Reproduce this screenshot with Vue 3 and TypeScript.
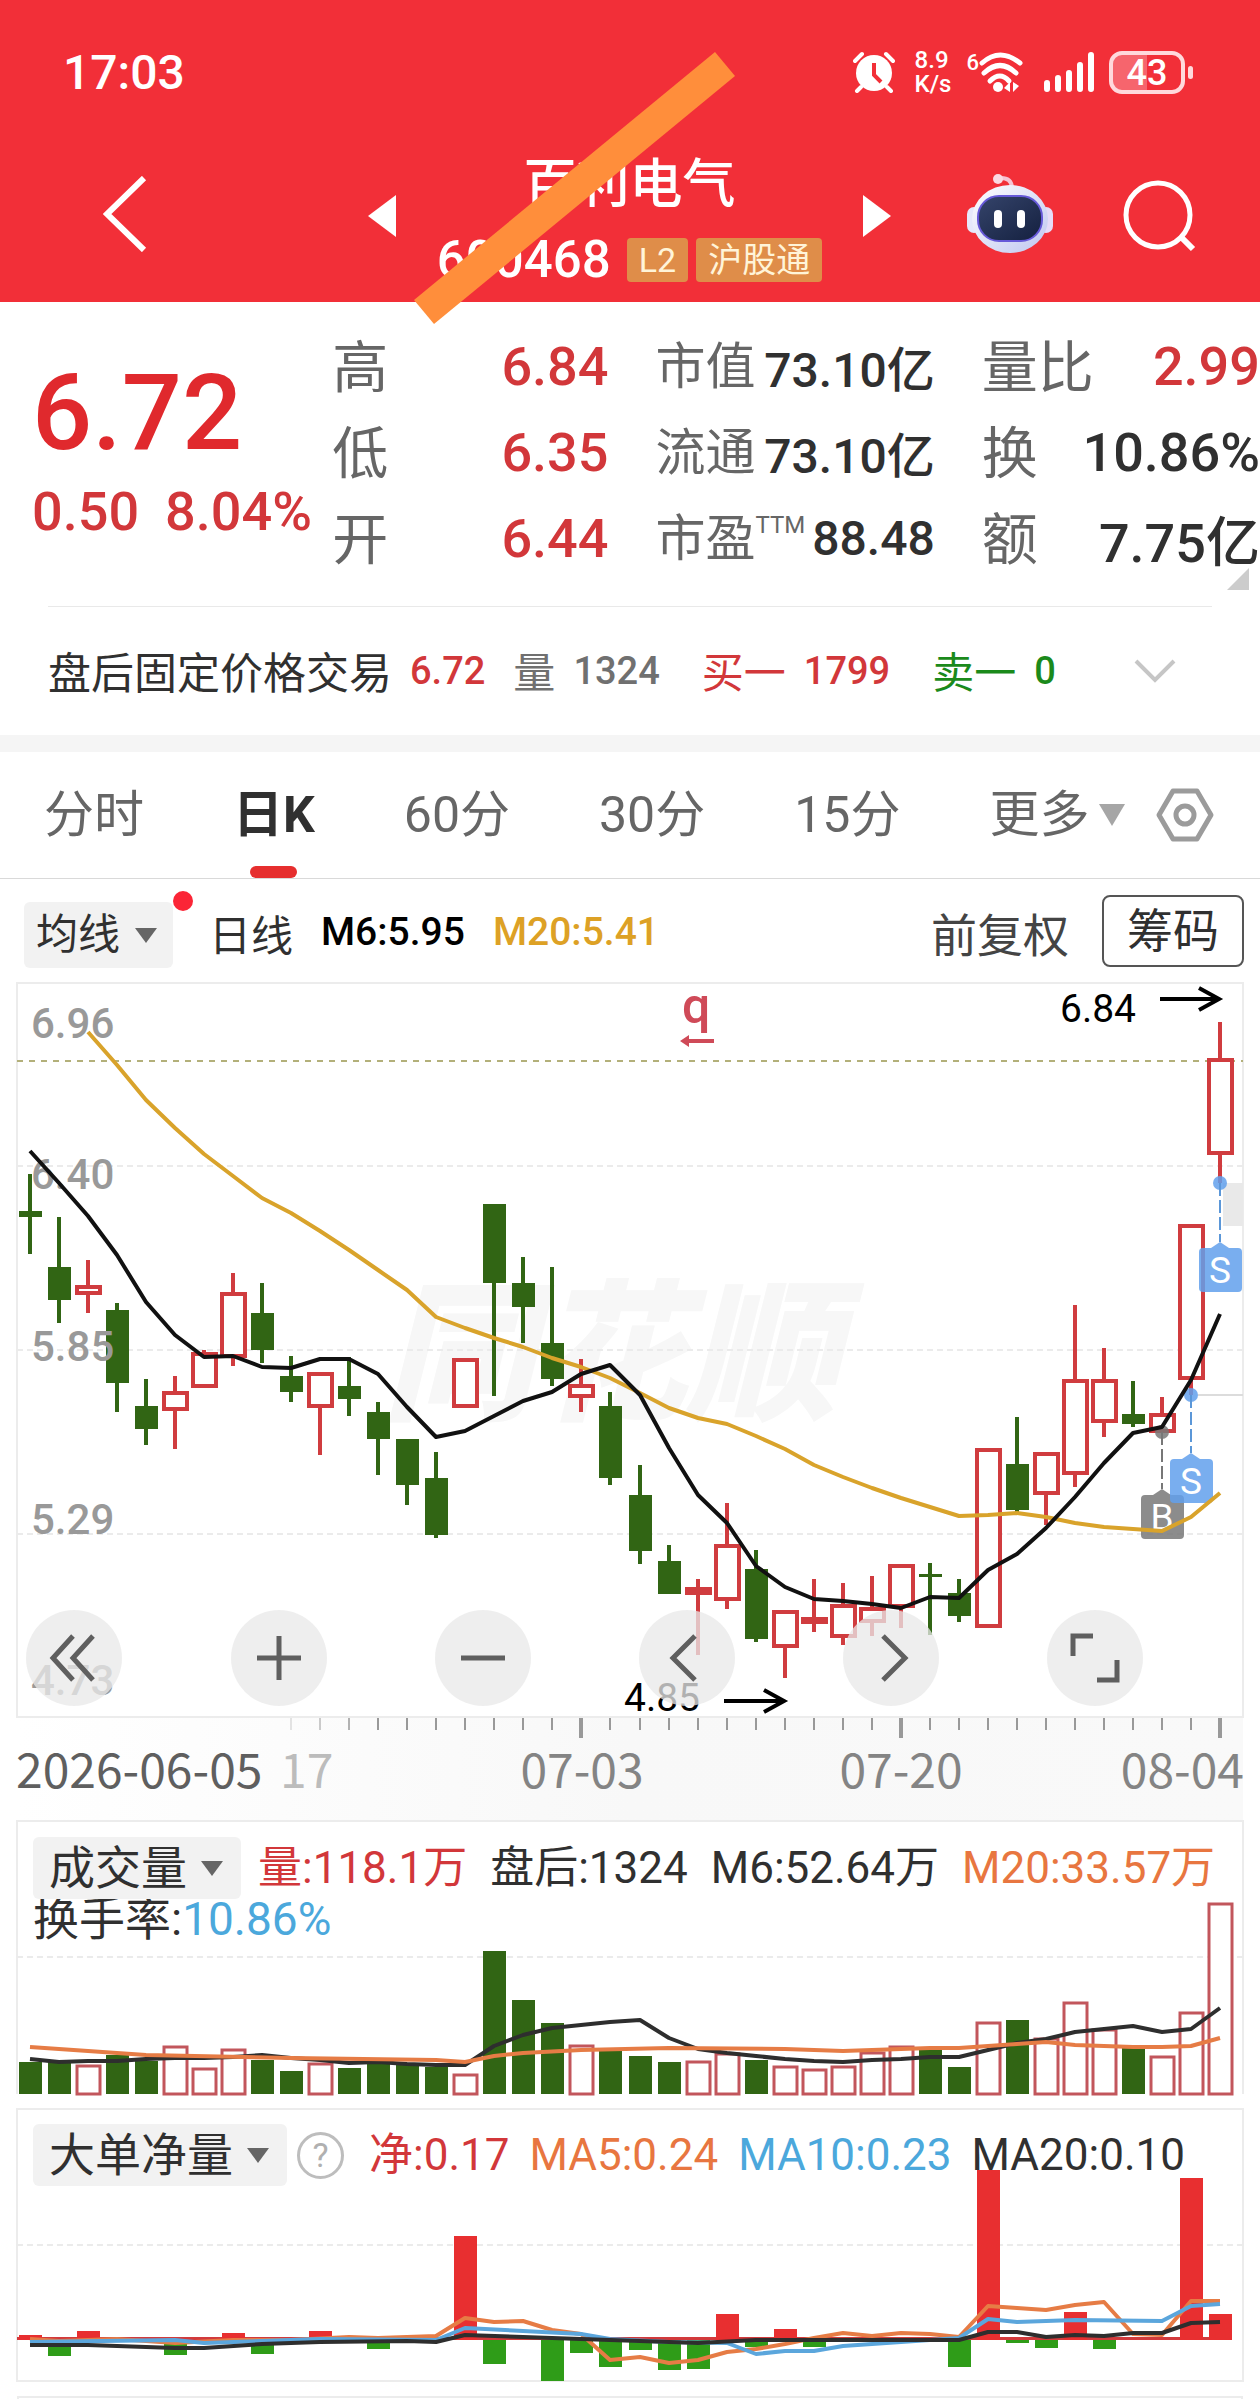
<script setup lang="ts">
type Candle = [high: number, top: number, bottom: number, low: number, up: 0 | 1]
type Point = [index: number, y: number]

const STEP = 29
const FIRST = 30
const HALF = 12

const cx = (i: number): number => FIRST + STEP * i + Math.round(i / 41)
const linePoints = (points: Point[]): string => points.map(([i, y]) => `${cx(i)},${y}`).join(' ')
const series = (ys: number[], start = 0): string => linePoints(ys.map((y, i) => [i + start, y] as Point))

const candles: Candle[] = [
  [194, 231, 237, 274, 0], [237, 287, 320, 343, 0], [280, 305, 314, 333, 1], [323, 330, 403, 432, 0],
  [399, 426, 449, 465, 0], [396, 411, 430, 469, 1], [370, 372, 407, 407, 1], [293, 312, 377, 386, 1],
  [303, 333, 370, 383, 0], [376, 396, 412, 422, 0], [392, 392, 427, 475, 1], [377, 406, 419, 436, 0],
  [422, 432, 459, 495, 0], [459, 459, 505, 525, 0], [472, 498, 555, 558, 0], [378, 378, 427, 428, 1],
  [224, 224, 303, 416, 0], [277, 303, 327, 363, 0], [287, 363, 399, 406, 0], [379, 404, 417, 432, 1],
  [412, 426, 498, 505, 0], [485, 515, 571, 584, 0], [565, 581, 614, 614, 0], [599, 607, 614, 675, 1],
  [523, 564, 620, 629, 1], [570, 589, 659, 662, 0], [630, 630, 667, 698, 1], [599, 637, 643, 652, 1],
  [603, 624, 657, 665, 1], [596, 627, 642, 656, 1], [584, 584, 627, 648, 1], [583, 594, 597, 655, 0],
  [599, 613, 636, 642, 0], [468, 468, 647, 647, 1], [437, 484, 530, 533, 0], [472, 472, 514, 545, 1],
  [325, 399, 494, 507, 1], [368, 399, 442, 457, 1], [401, 434, 444, 447, 0], [417, 433, 452, 452, 1],
  [244, 244, 399, 415, 1], [42, 78, 174, 203, 1],
]

const ma6 = series([
  171, 203, 236, 275, 322, 355, 377, 376, 387, 388, 379, 379, 394, 427, 457, 451, 436, 421, 412, 394, 385,
  415, 468, 515, 543, 586, 607, 619, 621, 624, 628, 617, 618, 590, 574, 548, 517, 483, 453, 447, 400, 334,
])
const ma20 = series([
  52, 85, 120, 148, 174, 196, 218, 233, 251, 270, 290, 310, 337, 348, 358, 367, 378, 387, 398, 413,
  428, 438, 444, 456, 469, 485, 497, 508, 518, 527, 536, 535, 533, 537, 543, 547, 549, 551, 537, 513,
], 2)

const priceLabels = [
  { text: '6.96', y: 58 }, { text: '6.40', y: 209 }, { text: '5.85', y: 381 },
  { text: '5.29', y: 554 }, { text: '4.73', y: 715 },
]
const ticks = Array.from({ length: 33 }, (_, k) => {
  const i = k + 9
  return { x: cx(i), major: i === 19 || i === 30 || i === 41, opacity: Math.min(1, (k + 1) / 4) }
})

const volumeTops = [
  242, 242, 245, 235, 241, 226, 248, 229, 240, 251, 243, 248, 244, 245, 247, 254, 131, 180, 203, 225, 230,
  236, 242, 241, 233, 240, 246, 249, 246, 232, 226, 230, 247, 202, 200, 218, 182, 209, 228, 236, 192, 83,
]
const volumeMa6 = series([
  239, 242, 241, 241, 239, 238, 238, 237, 235, 238, 240, 243, 242, 244, 245, 245, 226, 215, 208, 205, 202,
  200, 218, 229, 233, 236, 239, 241, 242, 240, 239, 237, 237, 230, 223, 219, 212, 209, 206, 212, 209, 188,
])
const volumeMa20 = linePoints([
  [0, 227], [4, 235], [9, 238], [14, 240], [15, 242], [16, 236], [17, 233], [19, 230], [22, 228], [26, 229],
  [28, 231], [31, 228], [32, 228], [34, 224], [35, 222], [36, 225], [38, 227], [39, 227], [40, 226], [41, 218],
])

const ZERO = 239
const inflow: Point[] = [
  [0, 235], [2, 231], [7, 233], [10, 231], [15, 136], [24, 214], [26, 229], [33, 70], [36, 212], [40, 78], [41, 214],
]
const outflow: Point[] = [
  [1, 256], [5, 255], [8, 254], [12, 249], [16, 264], [18, 281], [19, 253], [20, 267], [21, 250], [22, 270],
  [23, 269], [25, 247], [27, 247], [32, 267], [34, 243], [35, 248], [37, 249],
]
const netMa5 = linePoints([
  [0, 239], [1, 241], [3, 239], [5, 243], [7, 240], [9, 240], [11, 237], [12, 238], [13, 237], [14, 236],
  [15, 218], [16, 222], [17, 221], [18, 230], [19, 234], [20, 260], [21, 257], [22, 263], [23, 260], [24, 252],
  [25, 249], [26, 244], [27, 238], [28, 233], [29, 236], [30, 233], [31, 234], [32, 237], [33, 206], [34, 208],
  [35, 210], [36, 205], [37, 202], [38, 234], [39, 235], [40, 201], [41, 201],
])
const netMa10 = linePoints([
  [0, 242], [5, 240], [6, 243], [10, 239], [14, 240], [15, 228], [17, 231], [19, 234], [20, 239], [22, 242],
  [24, 243], [25, 254], [26, 251], [27, 251], [28, 246], [30, 242], [32, 238], [33, 219], [34, 222], [36, 220],
  [39, 221], [40, 206], [41, 204],
])
const netMa20 = linePoints([
  [0, 245], [2, 245], [3, 246], [5, 248], [6, 248], [8, 244], [10, 242], [13, 241], [14, 242], [15, 235],
  [17, 237], [19, 239], [22, 242], [23, 243], [25, 240], [32, 240], [33, 232], [34, 232], [35, 237], [36, 235],
  [37, 236], [38, 233], [39, 233], [40, 223], [41, 222],
])

const tradeMarks = [
  { kind: 'buy', text: 'B', x: cx(39), dot: 452, tip: 509, top: 515 },
  { kind: 'sell', text: 'S', x: cx(40), dot: 415, tip: 473, top: 479 },
  { kind: 'sell', text: 'S', x: cx(41), dot: 203, tip: 262, top: 268 },
]

const chartTools = [
  { label: '最早', d: 'M47 26 27 48 47 70M67 26 47 48 67 70' },
  { label: '放大', d: 'M26 48H70M48 26V70' },
  { label: '缩小', d: 'M26 48H70' },
  { label: '左移', d: 'M56 26 34 48 56 70' },
  { label: '右移', d: 'M40 26 62 48 40 70' },
  { label: '全屏', d: 'M46 26H26V46M70 50V70H50' },
]
</script>

<template>
  <main class="page">
    <header class="header">
      <div class="status">
        <span class="clock">17:03</span>
        <div class="status-icons">
          <svg class="alarm" width="42" height="42" viewBox="0 0 42 42">
            <circle cx="21" cy="22" r="18" fill="#fff" />
            <path d="M21 12V24L28 31" fill="none" stroke="#f22f38" stroke-width="4" />
            <path d="M2 10 9 3M40 10 33 3M8 36 4 40M34 36 38 40" stroke="#fff" stroke-width="4" stroke-linecap="round" />
          </svg>
          <span class="speed"><span>8.9</span><span>K/s</span></span>
          <span class="wifi-gen">6</span>
          <svg class="wifi" width="44" height="42" viewBox="0 0 44 42">
            <g fill="none" stroke="#fff" stroke-width="5" stroke-linecap="round">
              <path d="M3 12Q21 -4 41 12" /><path d="M5 22Q21 7 37 22" /><path d="M11 30Q21 20 30 30" />
            </g>
            <circle cx="19" cy="36" r="5" fill="#fff" />
            <path d="M31 31V41L25 37ZM34 41V31L40 35Z" fill="#fff" />
          </svg>
          <svg class="signal" width="50" height="42" viewBox="0 0 50 42">
            <path d="M3 32V38M14 27V38M25 22V38M36 14V38M47 4V38" stroke="#fff" stroke-width="6" stroke-linecap="round" />
          </svg>
          <span class="battery"><span>43</span></span>
        </div>
      </div>

      <div class="nav">
        <button class="icon-button raised" aria-label="返回">
          <svg width="44" height="76" viewBox="0 0 44 76"><path d="M41 2 4 38 41 74" fill="none" stroke="#fff" stroke-width="6" /></svg>
        </button>
        <button class="icon-button" aria-label="上一只">
          <svg width="28" height="42" viewBox="0 0 28 42"><path d="M28 0V42L0 21Z" fill="#fff" /></svg>
        </button>
        <div class="title">
          <h1>百利电气</h1>
          <div class="code"><span>600468</span><em>L2</em><em>沪股通</em></div>
        </div>
        <button class="icon-button" aria-label="下一只">
          <svg width="28" height="42" viewBox="0 0 28 42"><path d="M0 0V42L28 21Z" fill="#fff" /></svg>
        </button>
        <div class="actions">
          <button class="icon-button raised" aria-label="智能助手">
            <svg width="86" height="80" viewBox="0 0 86 80">
              <defs>
                <linearGradient id="helmet" x1="0" y1="0" x2="1" y2="1">
                  <stop offset="0" stop-color="#fff" /><stop offset="1" stop-color="#bfc6f0" />
                </linearGradient>
                <linearGradient id="visor" x1="0" y1="0" x2="1" y2="1">
                  <stop offset="0" stop-color="#35446b" /><stop offset="1" stop-color="#14203f" />
                </linearGradient>
              </defs>
              <path d="M32 5Q44 4 45 14" fill="none" stroke="#f6c3d4" stroke-width="4" />
              <circle cx="31" cy="6" r="5" fill="#fbd9e2" />
              <rect x="0" y="34" width="14" height="26" rx="7" fill="#e6e8fb" />
              <rect x="72" y="34" width="14" height="26" rx="7" fill="#e6dcf8" />
              <ellipse cx="43" cy="46" rx="38" ry="34" fill="url(#helmet)" />
              <rect x="11" y="23" width="64" height="45" rx="21" fill="url(#visor)" stroke="#6659d8" stroke-width="2" />
              <rect x="27" y="37" width="8" height="18" rx="4" fill="#fff" />
              <rect x="50" y="37" width="8" height="18" rx="4" fill="#fff" />
            </svg>
          </button>
          <button class="icon-button" aria-label="搜索">
            <svg width="74" height="74" viewBox="0 0 74 74">
              <circle cx="35" cy="36" r="32" fill="none" stroke="#fff" stroke-width="5" />
              <path d="M58 58 70 70" stroke="#fff" stroke-width="6" />
            </svg>
          </button>
        </div>
      </div>
      <svg class="stroke-mark" width="322" height="273" viewBox="0 0 322 273"><path d="M301 0 321 24 20 272 0 248Z" fill="#ff8e3b" /></svg>
    </header>

    <section class="quote">
      <div class="summary">
        <strong>6.72</strong>
        <p><span>0.50</span><span>8.04%</span></p>
      </div>
      <dl class="large">
        <div><dt>高</dt><dd class="up">6.84</dd></div>
        <div><dt>低</dt><dd class="up">6.35</dd></div>
        <div><dt>开</dt><dd class="up">6.44</dd></div>
      </dl>
      <dl class="medium">
        <div><dt>市值</dt><dd>73.10亿</dd></div>
        <div><dt>流通</dt><dd>73.10亿</dd></div>
        <div><dt>市盈<sup>TTM</sup></dt><dd>88.48</dd></div>
      </dl>
      <dl class="large">
        <div><dt>量比</dt><dd class="up">2.99</dd></div>
        <div><dt>换</dt><dd>10.86%</dd></div>
        <div><dt>额</dt><dd>7.75亿</dd></div>
      </dl>
      <svg class="corner" width="22" height="22" viewBox="0 0 22 22"><path d="M22 0V22H0Z" fill="#ccc" /></svg>
    </section>

    <section class="after-hours">
      <span class="pair">盘后固定价格交易<b class="up">6.72</b></span>
      <span class="pair muted">量<b>1324</b></span>
      <span class="pair up spaced">买一<b>1799</b></span>
      <span class="pair down spaced">卖一<b>0</b></span>
      <button class="icon-button expand" aria-label="展开">
        <svg width="42" height="24" viewBox="0 0 42 24"><path d="M2 2 21 21 40 2" fill="none" stroke="#c6c6c6" stroke-width="4" /></svg>
      </button>
    </section>

    <nav class="tabs">
      <button>分时</button>
      <button class="active">日K</button>
      <button>60分</button>
      <button>30分</button>
      <button>15分</button>
      <button class="more">更多<svg width="26" height="22" viewBox="0 0 26 22"><path d="M0 0H26L13 22Z" fill="#a6a6a6" /></svg></button>
      <button class="settings" aria-label="设置">
        <svg width="58" height="54" viewBox="0 0 58 54">
          <g fill="none" stroke="#9b9b9b" stroke-width="5">
            <path d="M17 3H41L55 27 41 51H17L3 27Z" stroke-linejoin="round" /><circle cx="29" cy="27" r="9" />
          </g>
        </svg>
      </button>
    </nav>

    <section class="toolbar">
      <label class="picker">
        <select aria-label="主图指标"><option>均线</option></select>
        <svg width="22" height="15" viewBox="0 0 22 15"><path d="M0 0H22L11 15Z" fill="#666" /></svg>
        <i class="dot"></i>
      </label>
      <span class="period">日线</span>
      <span class="m6">M6:5.95</span>
      <span class="m20">M20:5.41</span>
      <button class="adjust">前复权</button>
      <button class="chips">筹码</button>
    </section>

    <section class="kline">
      <svg class="plot" viewBox="0 0 1260 840">
        <defs>
          <linearGradient id="axis-fill" x1="0" x2="1" y1="0" y2="0">
            <stop offset="0" stop-color="#fff" /><stop offset="0.5" stop-color="#f8f8f8" /><stop offset="1" stop-color="#f9f9f9" />
          </linearGradient>
        </defs>
        <rect x="17" y="737" width="1226" height="103" fill="url(#axis-fill)" />
        <text class="watermark" x="382" y="428">同花顺</text>
        <rect class="frame" x="17" y="3" width="1226" height="734" />
        <path class="grid" d="M17 186H1243M17 370H1243M17 554H1243" />
        <path class="current" d="M17 81H1243" />
        <rect x="1223" y="203" width="20" height="43" fill="#e9e9e9" />
        <path d="M1198 415H1243" stroke="#dcdcdc" stroke-width="2" />

        <g v-for="(c, i) in candles" :key="i" :class="c[4] ? 'rise' : 'fall'">
          <path :d="`M${cx(i)} ${c[0]}V${c[1]}M${cx(i)} ${c[2]}V${c[3]}`" class="wick" />
          <rect v-if="c[4]" :x="cx(i) - HALF + 1" :y="c[1] + 2" :width="HALF * 2 - 1" :height="c[2] - c[1] - 3" />
          <rect v-else :x="cx(i) - HALF + 1" :y="c[1]" :width="HALF * 2 - 1" :height="c[2] - c[1]" />
        </g>

        <text v-for="p in priceLabels" :key="p.text" class="price" x="31" :y="p.y">{{ p.text }}</text>

        <g v-for="(m, i) in tradeMarks" :key="i" :class="m.kind">
          <circle :cx="m.x" :cy="m.dot" r="7" />
          <path :d="`M${m.x} ${m.dot}V${m.tip}`" class="stem" />
          <path :d="`M${m.x - 9} ${m.top}L${m.x} ${m.tip}L${m.x + 9} ${m.top}Z`" />
          <rect :x="m.x - 21" :y="m.top" width="43" height="44" rx="4" />
          <text :x="m.x" :y="m.top + 35">{{ m.text }}</text>
        </g>

        <polyline :points="ma20" stroke="#d9a32b" class="line" />
        <polyline :points="ma6" stroke="#111" class="line" />

        <text class="extreme" x="1060" y="42">6.84</text>
        <path class="arrow" d="M1160 19H1219M1199 8 1219 19 1199 30" />
        <text class="extreme" x="624" y="731">4.85</text>
        <path class="arrow" d="M724 721H784M764 710 784 721 764 732" />
        <text class="event" x="682" y="43">q</text>
        <path d="M714 59V63H689V67L680 61 689 55V59Z" fill="#cf4a58" />

        <path
          v-for="t in ticks" :key="t.x" :d="`M${t.x} 738V${t.major ? 758 : 750}`"
          stroke="#999" :stroke-width="t.major ? 4 : 2" :stroke-opacity="t.opacity"
        />
        <text class="date start" x="16" y="808">2026-06-05</text>
        <text class="date faded" x="280" y="808">17</text>
        <text class="date" x="582" y="808" text-anchor="middle">07-03</text>
        <text class="date" x="901" y="808" text-anchor="middle">07-20</text>
        <text class="date" x="1244" y="808" text-anchor="end">08-04</text>
      </svg>
      <div class="tools">
        <button v-for="t in chartTools" :key="t.label" :aria-label="t.label">
          <svg viewBox="0 0 96 96"><path :d="t.d" fill="none" stroke="#5f5f5f" stroke-width="5" /></svg>
        </button>
      </div>
    </section>

    <section class="panel">
      <svg class="plot" viewBox="0 0 1260 280">
        <path class="frame" d="M17 274V1H1243V274" />
        <path class="grid" d="M17 137H1243" />
        <g v-for="(y, i) in volumeTops" :key="i" :class="candles[i][4] ? 'rise thin' : 'fall'">
          <rect v-if="candles[i][4]" :x="cx(i) - HALF + 1" :y="y + 1" :width="HALF * 2 - 1" :height="273 - y" />
          <rect v-else :x="cx(i) - HALF + 1" :y="y" :width="HALF * 2 - 1" :height="274 - y" />
        </g>
        <polyline :points="volumeMa6" stroke="#2e2e2e" class="line" />
        <polyline :points="volumeMa20" stroke="#e67c45" class="line" />
      </svg>
      <div class="legend volume-legend">
        <label class="picker">
          <select aria-label="副图指标一"><option>成交量</option></select>
          <svg width="22" height="15" viewBox="0 0 22 15"><path d="M0 0H22L11 15Z" fill="#666" /></svg>
        </label>
        <span class="up">量:118.1万</span>
        <span>盘后:1324</span>
        <span>M6:52.64万</span>
        <span class="orange">M20:33.57万</span>
        <p>换手率:<span class="blue">10.86%</span></p>
      </div>
    </section>

    <section class="panel">
      <svg class="plot" viewBox="0 0 1260 296">
        <rect class="frame" x="17" y="9" width="1226" height="272" />
        <path class="grid" d="M17 145H1243" />
        <rect x="17" y="237" width="1203" height="3" fill="#d23a3c" />
        <rect v-for="[i, y] in inflow" :key="`in${i}`" :x="cx(i) - HALF + 1" :y="y" width="23" :height="ZERO - y + 1" fill="#e82f30" />
        <rect v-for="[i, y] in outflow" :key="`out${i}`" :x="cx(i) - HALF + 1" :y="ZERO + 1" width="23" :height="y - ZERO - 1" fill="#2f9c18" />
        <polyline :points="netMa5" stroke="#e67c45" class="line" />
        <polyline :points="netMa10" stroke="#5ba6dc" class="line" />
        <polyline :points="netMa20" stroke="#2e2e2e" class="line" />
      </svg>
      <div class="legend net-legend">
        <label class="picker">
          <select aria-label="副图指标二"><option>大单净量</option></select>
          <svg width="22" height="15" viewBox="0 0 22 15"><path d="M0 0H22L11 15Z" fill="#666" /></svg>
        </label>
        <button class="help" aria-label="指标说明">?</button>
        <span class="up">净:0.17</span>
        <span class="orange">MA5:0.24</span>
        <span class="blue">MA10:0.23</span>
        <span>MA20:0.10</span>
      </div>
    </section>
    <div class="next-panel"></div>
  </main>
</template>

<style>
body {
  margin: 0;
  background: #fff;
}
</style>

<style scoped>
.page {
  overflow: hidden;
  color: #303030;
  font-family: Roboto, "Noto Sans CJK SC", sans-serif;
  font-size: 44px;
  white-space: nowrap;
}
button,
select {
  margin: 0;
  padding: 0;
  border: 0;
  background: none;
  color: inherit;
  font: inherit;
  appearance: none;
}
h1, p, dl, dd {
  margin: 0;
}
svg {
  display: block;
}
.up { color: #d2373a; }
.down { color: #1b8a1b; }
.orange { color: #e87640; }
.blue { color: #4ba8dc; }
.icon-button { display: flex; }

.header {
  position: relative;
  background: #f22f38;
  color: #fff;
}
.status {
  display: flex;
  align-items: center;
  justify-content: space-between;
  height: 144px;
  padding: 0 75px 0 63px;
}
.clock {
  font-size: 48px;
  font-weight: 500;
}
.status-icons {
  display: flex;
  align-items: center;
}
.speed {
  display: flex;
  flex-direction: column;
  margin-left: 20px;
  font-size: 24px;
  font-weight: 500;
  line-height: 24px;
}
.wifi-gen {
  height: 60px;
  margin-left: 15px;
  font-size: 22px;
  font-weight: 500;
  line-height: 42px;
}
.signal { margin-left: 21px; }
.battery {
  position: relative;
  box-sizing: border-box;
  width: 76px;
  height: 43px;
  margin-left: 15px;
  border: 4px solid #ffd9dc;
  border-radius: 13px;
  background: linear-gradient(90deg, #f6656d 50%, transparent 50%);
  font-size: 36px;
  font-weight: 500;
  line-height: 36px;
  text-align: center;
}
.battery::after {
  content: "";
  position: absolute;
  top: 11px;
  right: -12px;
  width: 5px;
  height: 13px;
  border-radius: 3px;
  background: #ffd9dc;
}
.nav {
  display: grid;
  grid-template-columns: 265px 28px 1fr 28px 369px;
  align-items: center;
  padding: 4px 0 5px 103px;
}
.nav > .icon-button,
.actions {
  margin-bottom: 14px;
}
.nav > .raised { margin-bottom: 18px; }
.title { text-align: center; }
.title h1 {
  font-size: 53px;
  font-weight: 500;
  line-height: 74px;
}
.code {
  display: flex;
  align-items: center;
  justify-content: center;
  gap: 8px;
  font-size: 51px;
  font-weight: 500;
  line-height: 75px;
}
.code span { margin-right: 8px; }
.code em {
  padding: 0 12px;
  border-radius: 4px;
  background: #df8d49;
  color: #fff4d8;
  font-size: 34px;
  font-style: normal;
  font-weight: 400;
  line-height: 44px;
}
.actions {
  display: flex;
  align-items: center;
  gap: 70px;
  padding-left: 76px;
}
.actions .raised { margin-bottom: 6px; }
.stroke-mark {
  position: absolute;
  top: 52px;
  left: 50%;
  margin-left: -216px;
  z-index: 1;
}

.quote {
  position: relative;
  display: grid;
  grid-template-columns: 249fr 276fr 279fr 278fr;
  column-gap: 47px;
  padding: 21px 0 25px 36px;
}
.quote > * { min-width: 0; }
.summary {
  padding-top: 34px;
  color: #e0292d;
  font-weight: 500;
}
.summary strong {
  display: block;
  margin-left: -4px;
  font-size: 106px;
  font-weight: 500;
  line-height: 112px;
}
.summary p {
  display: flex;
  gap: 26px;
  margin-left: -4px;
  color: #d2373a;
  font-size: 54px;
  line-height: 86px;
}
.quote dl > div {
  display: flex;
  align-items: center;
  justify-content: space-between;
  height: 86px;
}
.quote dt {
  display: flex;
  align-items: center;
  padding-bottom: 8px;
  color: #666;
}
.quote dd { font-weight: 500; }
.large { font-size: 56px; }
.large dd { font-size: 54px; }
.medium { font-size: 50px; }
.medium dd { font-size: 48px; }
.quote sup {
  margin-bottom: 18px;
  font-size: 24px;
  line-height: 24px;
}
.corner {
  position: absolute;
  right: 11px;
  bottom: 16px;
}

.after-hours {
  display: flex;
  align-items: center;
  gap: 28px;
  height: 128px;
  margin: 0 48px;
  border-top: 1px solid #e9e9e9;
  font-size: 42px;
}
.pair {
  display: flex;
  align-items: center;
  gap: 18px;
  padding-bottom: 3px;
}
.pair:first-child { font-size: 43px; }
.pair b {
  padding-top: 3px;
  font-size: 38px;
  font-weight: 500;
}
.muted { color: #707070; }
.spaced { margin-left: 14px; }
.expand { margin: 0 36px 0 auto; }

.tabs {
  display: flex;
  align-items: center;
  gap: 89px;
  height: 126px;
  padding: 0 47px 0 44px;
  border-top: 17px solid #f5f5f5;
  border-bottom: 1px solid #d9d9d9;
  color: #666;
  font-size: 50px;
}
.tabs button {
  position: relative;
  line-height: 126px;
}
.tabs .active {
  color: #303030;
  font-weight: 700;
}
.active::after {
  content: "";
  position: absolute;
  bottom: 0;
  left: 50%;
  width: 47px;
  height: 12px;
  margin-left: -24px;
  border-radius: 6px;
  background: #e62e2e;
}
.more,
.settings {
  display: flex;
  align-items: center;
}
.more { gap: 10px; }
.tabs .settings { margin-left: -58px; }

.toolbar {
  display: flex;
  align-items: center;
  height: 96px;
  padding: 5px 16px 0 24px;
  font-size: 42px;
  font-weight: 500;
}
.picker {
  position: relative;
  display: inline-flex;
  align-items: center;
  gap: 14px;
  padding: 0 18px 0 16px;
  border-radius: 6px;
  background: #f2f2f2;
  line-height: 62px;
}
.toolbar .picker {
  margin-top: 6px;
  padding: 0 16px 0 12px;
  font-weight: 400;
  line-height: 66px;
}
.dot {
  position: absolute;
  top: -11px;
  right: -20px;
  width: 20px;
  height: 20px;
  border-radius: 50%;
  background: #fb2536;
}
.period {
  margin-left: 36px;
  font-weight: 400;
}
.m6 {
  margin-left: 28px;
  color: #000;
  font-size: 39px;
}
.m20 {
  margin-left: 28px;
  color: #dda125;
  font-size: 39px;
}
.adjust {
  margin-left: auto;
  color: #444;
  font-size: 46px;
  font-weight: 400;
}
.chips {
  box-sizing: border-box;
  height: 72px;
  margin: 0 0 3px 33px;
  padding: 0 23px;
  border: 2px solid #555;
  border-radius: 8px;
  font-size: 46px;
  font-weight: 400;
  line-height: 64px;
}

.kline { position: relative; }
.plot {
  width: 100%;
  height: auto;
  overflow: visible;
}
.frame {
  fill: none;
  stroke: #ececec;
  stroke-width: 2;
}
.grid {
  fill: none;
  stroke: #ebebeb;
  stroke-width: 2;
  stroke-dasharray: 6 4;
}
.current {
  stroke: #b3b07a;
  stroke-width: 2;
  stroke-dasharray: 6 6;
}
.watermark {
  fill: #f7f7f7;
  font-size: 152px;
  font-style: italic;
  font-weight: 900;
}
.rise rect {
  fill: #fff;
  stroke: #d03c3f;
  stroke-width: 4;
}
.rise .wick {
  stroke: #d03c3f;
  stroke-width: 4;
}
.thin rect {
  stroke: #c2565c;
  stroke-width: 3;
}
.fall rect { fill: #316514; }
.fall .wick {
  stroke: #316514;
  stroke-width: 4;
}
.line {
  fill: none;
  stroke-width: 4;
  stroke-linejoin: round;
}
.price {
  fill: #999;
  font-size: 42px;
  font-weight: 500;
}
.extreme {
  fill: #000;
  font-size: 39px;
}
.event {
  fill: #cf4a58;
  font-size: 50px;
  font-weight: 500;
}
.arrow {
  fill: none;
  stroke: #000;
  stroke-width: 4;
}
.sell { fill: rgba(98, 160, 236, 0.85); }
.buy { fill: rgba(120, 120, 120, 0.85); }
.stem {
  stroke: #5b97d8;
  stroke-width: 2;
  stroke-dasharray: 13 4;
}
.buy .stem { stroke: #777; }
.sell text,
.buy text {
  fill: #fff;
  font-size: 37px;
  text-anchor: middle;
}
.date {
  fill: #848484;
  font-family: "Noto Sans CJK SC", sans-serif;
  font-size: 48px;
}
.start { fill: #5f5f5f; }
.faded { fill: #bcbcbc; }

.tools {
  position: absolute;
  right: 9.3%;
  bottom: 114px;
  left: 2.1%;
  display: flex;
  justify-content: space-between;
}
.tools button {
  width: 96px;
  height: 96px;
  border-radius: 50%;
  background: rgba(233, 233, 233, 0.76);
}

.panel { display: grid; }
.panel > * { grid-area: 1 / 1; }
.legend {
  display: flex;
  flex-wrap: wrap;
  align-content: flex-start;
  align-items: center;
  column-gap: 23px;
  padding-left: 33px;
  line-height: 62px;
}
.legend .picker { font-size: 46px; }
.volume-legend { padding-top: 17px; }
.volume-legend .picker { margin-right: -6px; }
.legend p {
  flex-basis: 100%;
  font-size: 46px;
  line-height: 40px;
}
.net-legend {
  column-gap: 20px;
  padding-top: 24px;
}
.help {
  box-sizing: border-box;
  width: 47px;
  height: 47px;
  margin: 0 5px 0 -10px;
  border: 3px solid #bdbdbd;
  border-radius: 50%;
  color: #b0b0b0;
  font-size: 34px;
  line-height: 40px;
}
.next-panel {
  height: 1px;
  margin: 0 17px;
  border: 2px solid #ececec;
  border-bottom: 0;
}
</style>
